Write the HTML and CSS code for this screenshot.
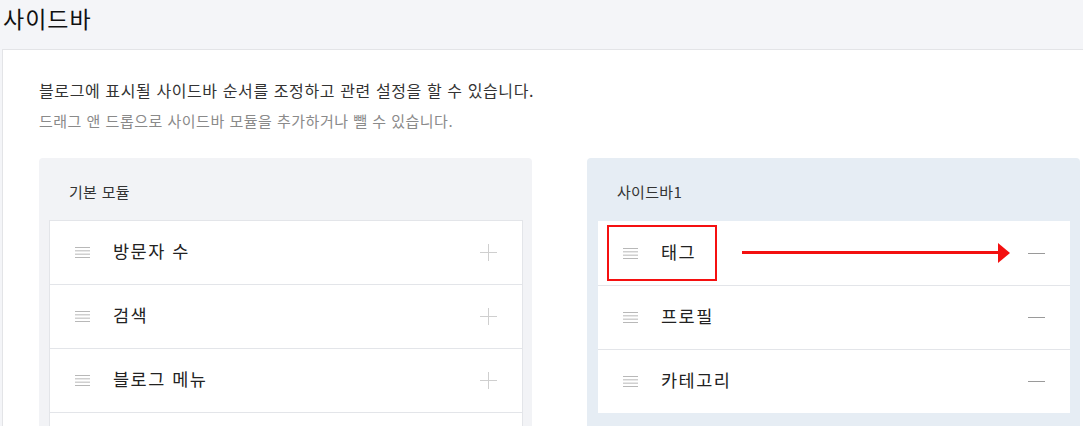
FILE: index.html
```html
<!DOCTYPE html>
<html lang="ko">
<head>
<meta charset="utf-8">
<title>사이드바</title>
<link rel="stylesheet" href="styles.css">
</head>
<body>
<header class="page-head">
  <h1 class="page-title">사이드바</h1>
</header>
<main class="card">
  <p class="desc">블로그에 표시될 사이드바 순서를 조정하고 관련 설정을 할 수 있습니다.</p>
  <p class="desc-sub">드래그 앤 드롭으로 사이드바 모듈을 추가하거나 뺄 수 있습니다.</p>
  <div class="columns">
    <section class="panel panel-basic">
      <h2 class="panel-title">기본 모듈</h2>
      <ul class="list">
        <li class="row"><svg class="grip" viewBox="0 0 15 11"><path d="M0 0.5H15M0 3.83H15M0 7.17H15M0 10.5H15"/></svg><span class="name">방문자 수</span><svg class="act" viewBox="0 0 17 17"><path d="M8.5 0V17M0 8.5H17"/></svg></li>
        <li class="row"><svg class="grip" viewBox="0 0 15 11"><path d="M0 0.5H15M0 3.83H15M0 7.17H15M0 10.5H15"/></svg><span class="name">검색</span><svg class="act" viewBox="0 0 17 17"><path d="M8.5 0V17M0 8.5H17"/></svg></li>
        <li class="row"><svg class="grip" viewBox="0 0 15 11"><path d="M0 0.5H15M0 3.83H15M0 7.17H15M0 10.5H15"/></svg><span class="name">블로그 메뉴</span><svg class="act" viewBox="0 0 17 17"><path d="M8.5 0V17M0 8.5H17"/></svg></li>
        <li class="row row-empty"></li>
      </ul>
    </section>
    <section class="panel panel-side">
      <h2 class="panel-title">사이드바1</h2>
      <ul class="list">
        <li class="row row-marked"><svg class="grip" viewBox="0 0 15 11"><path d="M0 0.5H15M0 3.83H15M0 7.17H15M0 10.5H15"/></svg><span class="name">태그</span><svg class="act act-minus" viewBox="0 0 17 17"><path d="M0 8.5H17"/></svg>
          <span class="mark-box"></span>
          <span class="mark-arrow"><span class="arrow-line"></span><span class="arrow-head"></span></span>
        </li>
        <li class="row"><svg class="grip" viewBox="0 0 15 11"><path d="M0 0.5H15M0 3.83H15M0 7.17H15M0 10.5H15"/></svg><span class="name">프로필</span><svg class="act act-minus" viewBox="0 0 17 17"><path d="M0 8.5H17"/></svg></li>
        <li class="row"><svg class="grip" viewBox="0 0 15 11"><path d="M0 0.5H15M0 3.83H15M0 7.17H15M0 10.5H15"/></svg><span class="name">카테고리</span><svg class="act act-minus" viewBox="0 0 17 17"><path d="M0 8.5H17"/></svg></li>
      </ul>
    </section>
  </div>
</main>
</body>
</html>
```

FILE: styles.css
```css
html, body {
  margin: 0;
  padding: 0;
}
body {
  width: 1083px;
  height: 426px;
  overflow: hidden;
  background: #f4f5f8;
  font-family: "Noto Sans CJK KR", "Noto Sans", sans-serif;
  color: #333;
}
.page-head {
  height: 49px;
  box-sizing: border-box;
  padding: 5px 0 0 3px;
}
.page-title {
  margin: 0;
  font-size: 23px;
  line-height: 26px;
  font-weight: 400;
  letter-spacing: 1px;
  color: #111;
}
.card {
  margin-left: 2px;
  width: 1081px;
  height: 377px;
  overflow: hidden;
  background: #fff;
  border-top: 1px solid #e3e4e7;
  border-left: 1px solid #e3e4e7;
  padding: 28px 0 0 36px;
  box-sizing: border-box;
}
.desc {
  margin: 0;
  font-size: 16px;
  line-height: 24px;
  letter-spacing: 0.6px;
  color: #333;
}
.desc-sub {
  margin: 8px 0 0;
  font-size: 15px;
  line-height: 22px;
  letter-spacing: 0.5px;
  color: #8a8a8a;
}
.columns {
  display: grid;
  grid-template-columns: 493px 493px;
  column-gap: 55px;
  margin-top: 26px;
}
.panel {
  border-radius: 4px 4px 0 0;
  padding: 23px 9px 14px 10px;
  min-height: 300px;
}
.panel-basic {
  background: #f2f3f6;
}
.panel-side {
  background: #e6edf4;
}
.panel-title {
  margin: 0 0 17px 20px;
  font-size: 15px;
  line-height: 22px;
  font-weight: 400;
  letter-spacing: 0.3px;
  color: #333;
}
.panel-side .panel-title {
  margin-bottom: 18px;
}
.list {
  list-style: none;
  margin: 0;
  padding: 0;
  background: #fff;
  border: 1px solid #e3e5e9;
  border-top: 0;
}
.panel-side .list {
  border-color: #e6edf4;
}
.row {
  position: relative;
  display: flex;
  align-items: center;
  height: 63px;
  border-top: 1px solid #e3e5e9;
  padding: 0 25px 0 25px;
}
.panel-side .row:first-child {
  border-top-color: #fff;
}
.grip {
  width: 15px;
  height: 11px;
  flex: none;
  fill: none;
  stroke: #b8b8b8;
  stroke-width: 1;
}
.name {
  margin-left: 23px;
  padding-bottom: 3px;
  flex: 1;
  font-size: 17.5px;
  line-height: 24px;
  letter-spacing: 1.5px;
  color: #222;
}
.act {
  width: 17px;
  height: 17px;
  flex: none;
  fill: none;
  stroke: #cfcfcf;
  stroke-width: 1;
}
.act-minus {
  stroke: #9a9a9a;
}
.mark-box {
  position: absolute;
  left: 9px;
  top: 3px;
  width: 110px;
  height: 56px;
  box-sizing: border-box;
  border: 2px solid #f51010;
}
.mark-arrow {
  position: absolute;
  left: 144px;
  top: 20px;
  display: flex;
  align-items: center;
  height: 21px;
}
.arrow-line {
  width: 256px;
  height: 3px;
  background: #f31010;
}
.arrow-head {
  width: 0;
  height: 0;
  border-top: 10px solid transparent;
  border-bottom: 10px solid transparent;
  border-left: 12px solid #f31010;
}
```
